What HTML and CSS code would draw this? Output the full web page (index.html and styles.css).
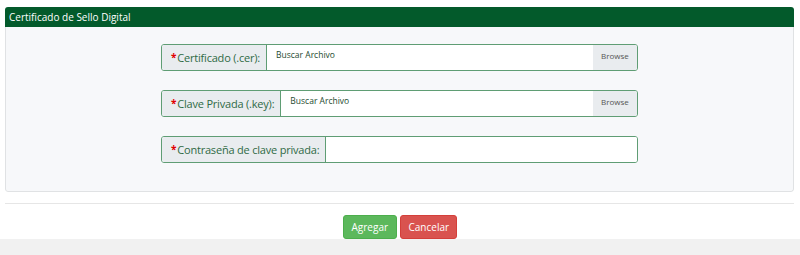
FILE: index.html
```html
<!DOCTYPE html>
<html lang="es">
<head>
    <meta charset="UTF-8">
    <meta name="viewport" content="width=device-width, initial-scale=1.0">
    <title>Certificado de Sello Digital</title>
    <link rel="stylesheet" href="styles.css">
</head>
<body>

    <div class="page">
        <!-- Panel del certificado -->
        <div class="panel">
            <div class="panel-heading">Certificado de Sello Digital</div>
            <div class="panel-body">
                <div class="input-group">
                    <span class="addon"><span class="req">*</span>Certificado (.cer):</span>
                    <span class="file-name">Buscar Archivo</span>
                    <span class="browse">Browse</span>
                </div>

                <div class="input-group">
                    <span class="addon"><span class="req">*</span>Clave Privada (.key):</span>
                    <span class="file-name">Buscar Archivo</span>
                    <span class="browse">Browse</span>
                </div>

                <div class="input-group">
                    <span class="addon"><span class="req">*</span>Contraseña de clave privada:</span>
                    <input type="password" class="field">
                </div>
            </div>
        </div>

        <hr class="divider">

        <div class="actions">
            <button class="btn btn-success">Agregar</button>
            <button class="btn btn-danger">Cancelar</button>
        </div>
    </div>

    <div class="footer"></div>

</body>
</html>
```

FILE: styles.css
```css
/* Global */
body {
    margin: 0;
    font-family: "Open Sans", "Noto Sans", sans-serif;
    background-color: #fff;
}

.page {
    padding: 7px 6px 0 5px;
}

/* Panel */
.panel {
    border-radius: 3px;
    overflow: hidden;
}

.panel-heading {
    height: 20px;
    line-height: 20px;
    padding-left: 4px;
    font-size: 10px;
    color: #fff;
    background-color: #035a2b;
}

.panel-body {
    height: 147px;
    padding-top: 17px;
    display: flex;
    flex-direction: column;
    align-items: center;
    gap: 19px;
    background-color: #f7f8fa;
    border: 1px solid #e0e2e4;
    border-top: none;
    border-radius: 0 0 3px 3px;
}

/* Grupo de entrada */
.input-group {
    display: flex;
    width: 475px;
    height: 25px;
    border: 1px solid #5f9d74;
    border-radius: 3px;
    background-color: #fff;
    overflow: hidden;
}

.addon {
    display: flex;
    align-items: center;
    padding: 0 6px 0 9px;
    font-size: 11px;
    color: #2f6a45;
    background-color: #e9ecef;
    border-right: 1px solid #5f9d74;
    white-space: nowrap;
    letter-spacing: -0.2px;
}

.req {
    color: #e00000;
    font-size: 10px;
    font-weight: bold;
    margin-right: 1px;
    align-self: flex-start;
    margin-top: 5px;
}

.file-name {
    flex: 1;
    padding: 4px 0 0 9px;
    font-size: 8.5px;
    color: #1e4a2f;
}

.browse {
    width: 44px;
    padding-top: 5px;
    text-align: center;
    font-size: 8px;
    color: #555;
    background-color: #e9ecef;
}

.field {
    flex: 1;
    border: none;
    outline: none;
    padding: 0;
}

/* Separador y botones */
.divider {
    margin: 11px 0 0 0;
    border: none;
    border-top: 1px solid #e6e6e6;
}

.actions {
    display: flex;
    justify-content: center;
    gap: 3px;
    padding-top: 11px;
}

.btn {
    height: 24px;
    padding: 0 8px;
    font-family: "Open Sans", "Noto Sans", sans-serif;
    font-size: 10px;
    color: #fff;
    border: 1px solid transparent;
    border-radius: 3px;
    cursor: pointer;
}

.btn-success {
    width: 54px;
    background-color: #5cb85c;
    border-color: #4cae4c;
}

.btn-danger {
    width: 57px;
    background-color: #d9534f;
    border-color: #d43f3a;
}

.footer {
    height: 16px;
    background-color: #f1f1f1;
}
```
